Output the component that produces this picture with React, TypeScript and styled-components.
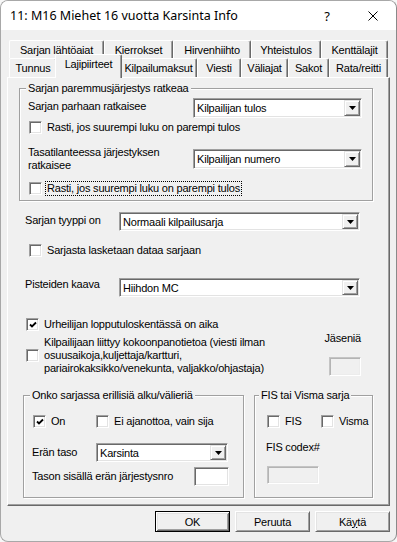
import styled, { createGlobalStyle, css } from "styled-components";

const GlobalStyle = createGlobalStyle`
  html, body {
    margin: 0;
    padding: 0;
    background: #f7f7f7;
  }
  body {
    font-family: "Liberation Sans", Arial, sans-serif;
    font-size: 11px;
    letter-spacing: -0.2px;
    color: #000;
  }
  * {
    box-sizing: border-box;
  }
`;

const Window = styled.div`
  width: 397px;
  height: 542px;
  display: flex;
  flex-direction: column;
  border: 1px solid #a8a8a8;
  border-right-color: #8a8a8a;
  border-radius: 8px;
  overflow: hidden;
  background: #f0f0f0;
`;

const TitleBar = styled.div`
  height: 29px;
  flex: none;
  display: flex;
  align-items: center;
  background: #fff;
  padding-left: 9px;
`;

const Title = styled.span`
  flex: 1;
  font-family: "Noto Sans", "Liberation Sans", sans-serif;
  font-size: 12.5px;
  letter-spacing: 0;
`;

const CaptionButton = styled.span`
  width: 46px;
  height: 29px;
  display: flex;
  align-items: center;
  justify-content: center;
  font-family: "Noto Sans", "Liberation Sans", sans-serif;
  font-size: 13px;
  letter-spacing: 0;
`;

const Body = styled.div`
  flex: 1;
  display: flex;
  flex-direction: column;
  padding: 10px 6px 0;
`;

const TabStrip = styled.div`
  display: flex;
  flex-direction: column;
  margin-left: 2px;
`;

const TabRow = styled.div<{ $h: number }>`
  display: flex;
  align-items: flex-start;
  height: ${(p) => p.$h}px;
`;

const Tab = styled.div<{ $w: number; $h: number; $active?: boolean }>`
  flex: none;
  width: ${(p) => p.$w}px;
  height: ${(p) => p.$h}px;
  padding-top: 2px;
  line-height: 14px;
  text-align: center;
  white-space: nowrap;
  background: #f0f0f0;
  border-top: 1px solid #fff;
  border-left: 1px solid #fff;
  border-right: 1px solid #696969;
  border-radius: 2px 2px 0 0;
  box-shadow: inset -1px 0 0 #a0a0a0;
  ${(p) =>
    p.$active &&
    css`
      position: relative;
      z-index: 1;
      width: ${p.$w + 4}px;
      height: ${p.$h + 5}px;
      margin: -4px -2px 0;
    `}
`;

const Panel = styled.div`
  height: 429px;
  flex: none;
  display: flex;
  flex-direction: column;
  border-top: 1px solid #fff;
  border-left: 1px solid #fff;
  border-right: 1px solid #696969;
  border-bottom: 1px solid #696969;
  box-shadow: inset -1px -1px 0 #a0a0a0;
`;

const GroupBox = styled.fieldset<{ $w: number; $h: number; $mt?: number; $ml?: number }>`
  flex: none;
  width: ${(p) => p.$w}px;
  height: ${(p) => p.$h}px;
  margin: ${(p) => p.$mt ?? 0}px 0 0 ${(p) => p.$ml ?? 0}px;
  padding: 0 8px;
  min-inline-size: 0;
  display: flex;
  flex-direction: column;
  border: 1px solid #a0a0a0;
  box-shadow: inset 1px 1px 0 #fff, 1px 1px 0 #fff;
`;

const Legend = styled.legend<{ $offset?: number }>`
  padding: 0 2px;
  margin-left: ${(p) => p.$offset ?? -2}px;
  line-height: 13px;
  background: #f0f0f0;
`;

const FieldRow = styled.div<{ $mt?: number; $ml?: number }>`
  display: flex;
  align-items: flex-start;
  margin: ${(p) => p.$mt ?? 0}px 0 0 ${(p) => p.$ml ?? 0}px;
`;

const FieldLabel = styled.span<{ $w?: number; $mt?: number; $ml?: number }>`
  flex: none;
  ${(p) => p.$w !== undefined && `width: ${p.$w}px;`}
  margin: ${(p) => p.$mt ?? 0}px 0 0 ${(p) => p.$ml ?? 0}px;
  line-height: 13px;
  white-space: nowrap;
`;

const sunken = css`
  border: 1px solid;
  border-color: #a0a0a0 #fff #fff #a0a0a0;
  box-shadow: inset 1px 1px 0 #696969, inset -1px -1px 0 #e3e3e3;
`;

const Combo = styled.div<{ $w: number; $h: number; $mt?: number }>`
  flex: none;
  display: flex;
  width: ${(p) => p.$w}px;
  height: ${(p) => p.$h}px;
  margin-top: ${(p) => p.$mt ?? 0}px;
  padding: 1px;
  background: #fff;
  ${sunken}
`;

const ComboValue = styled.span`
  flex: 1;
  display: flex;
  align-items: center;
  padding-left: 2px;
  white-space: nowrap;
`;

const DropButton = styled.span`
  flex: none;
  width: 16px;
  display: flex;
  align-items: center;
  justify-content: center;
  background: #f0f0f0;
  border: 1px solid;
  border-color: #e3e3e3 #696969 #696969 #e3e3e3;
  box-shadow: inset 1px 1px 0 #fff, inset -1px -1px 0 #a0a0a0;
`;

const TextBox = styled.div<{ $w: number; $h: number; $mt?: number; $ml?: number; $disabled?: boolean }>`
  flex: none;
  width: ${(p) => p.$w}px;
  height: ${(p) => p.$h}px;
  margin: ${(p) => p.$mt ?? 0}px 0 0 ${(p) => p.$ml ?? 0}px;
  background: ${(p) => (p.$disabled ? "#f0f0f0" : "#fff")};
  ${sunken}
  ${(p) =>
    p.$disabled &&
    css`
      border-color: #c4c4c4 #fff #fff #c4c4c4;
      box-shadow: inset 1px 1px 0 #b4b4b4, inset -1px -1px 0 #ececec;
    `}
`;

const CheckRow = styled.div<{ $mt?: number; $ml?: number }>`
  display: flex;
  align-items: center;
  margin: ${(p) => p.$mt ?? 0}px 0 0 ${(p) => p.$ml ?? 0}px;
`;

const CheckItem = styled.div<{ $w?: number; $mt?: number }>`
  flex: none;
  display: flex;
  align-items: center;
  ${(p) => p.$w !== undefined && `width: ${p.$w}px;`}
  margin-top: ${(p) => p.$mt ?? 0}px;
`;

const Box = styled.span`
  flex: none;
  width: 13px;
  height: 13px;
  margin-right: 3px;
  display: flex;
  align-items: center;
  justify-content: center;
  background: #fff;
  ${sunken}
`;

const CheckText = styled.span<{ $focused?: boolean }>`
  padding: 0 1px;
  line-height: 13px;
  white-space: nowrap;
  border: 1px ${(p) => (p.$focused ? "dotted #000" : "solid transparent")};
`;

const MemberColumn = styled.div`
  margin-left: auto;
  margin-right: 28px;
  display: flex;
  flex-direction: column;
  align-items: flex-end;
`;

const BottomGroups = styled.div`
  display: flex;
  gap: 10px;
  margin: 13px 0 0 15px;
`;

const ButtonRow = styled.div`
  display: flex;
  justify-content: flex-end;
  gap: 5px;
  margin-top: 5px;
`;

const DialogButton = styled.button<{ $default?: boolean }>`
  width: 75px;
  height: 21px;
  padding: 0;
  font: inherit;
  letter-spacing: -0.2px;
  color: #000;
  background: #f0f0f0;
  border: 1px solid;
  border-color: #fff #696969 #696969 #fff;
  box-shadow: inset 1px 1px 0 #e3e3e3, inset -1px -1px 0 #a0a0a0;
  ${(p) =>
    p.$default &&
    css`
      border-color: #000;
      box-shadow: inset 1px 1px 0 #fff, inset -1px -1px 0 #696969, inset 2px 2px 0 #e3e3e3,
        inset -2px -2px 0 #a0a0a0;
    `}
`;

const Arrow = () => (
  <svg width="7" height="4" viewBox="0 0 7 4">
    <polygon points="0,0 7,0 3.5,4" fill="#000" />
  </svg>
);

const CheckMark = () => (
  <svg width="8" height="8" viewBox="0 0 8 8">
    <path d="M1 3.5 L3 5.5 L7 1.5" stroke="#000" strokeWidth="1.8" fill="none" />
  </svg>
);

const CloseIcon = () => (
  <svg width="10" height="10" viewBox="0 0 10 10">
    <path d="M0.5 0.5 L9.5 9.5 M9.5 0.5 L0.5 9.5" stroke="#000" strokeWidth="1" />
  </svg>
);

function Dropdown({ value, w, h, mt }: { value: string; w: number; h: number; mt?: number }) {
  return (
    <Combo $w={w} $h={h} $mt={mt}>
      <ComboValue>{value}</ComboValue>
      <DropButton>
        <Arrow />
      </DropButton>
    </Combo>
  );
}

function Check({ checked, children, focused }: { checked?: boolean; children: React.ReactNode; focused?: boolean }) {
  return (
    <>
      <Box>{checked && <CheckMark />}</Box>
      <CheckText $focused={focused}>{children}</CheckText>
    </>
  );
}

const backTabs = [
  { label: "Sarjan lähtöajat", w: 95 },
  { label: "Kierrokset", w: 69 },
  { label: "Hirvenhiihto", w: 78 },
  { label: "Yhteistulos", w: 70 },
  { label: "Kenttälajit", w: 67 },
];

const frontTabs = [
  { label: "Tunnus", w: 48 },
  { label: "Lajipiirteet", w: 63, active: true },
  { label: "Kilpailumaksut", w: 77 },
  { label: "Viesti", w: 44 },
  { label: "Väliajat", w: 47 },
  { label: "Sakot", w: 41 },
  { label: "Rata/reitti", w: 59 },
];

export default function App() {
  return (
    <>
      <GlobalStyle />
      <Window>
        <TitleBar>
          <Title>11: M16 Miehet 16 vuotta Karsinta Info</Title>
          <CaptionButton>?</CaptionButton>
          <CaptionButton>
            <CloseIcon />
          </CaptionButton>
        </TitleBar>
        <Body>
          <TabStrip>
            <TabRow $h={18}>
              {backTabs.map((t) => (
                <Tab key={t.label} $w={t.w} $h={18}>
                  {t.label}
                </Tab>
              ))}
            </TabRow>
            <TabRow $h={19}>
              {frontTabs.map((t) => (
                <Tab key={t.label} $w={t.w} $h={19} $active={t.active}>
                  {t.label}
                </Tab>
              ))}
            </TabRow>
          </TabStrip>

          <Panel>
            <GroupBox $w={354} $h={119} $mt={4} $ml={11}>
              <Legend>Sarjan paremmusjärjestys ratkeaa</Legend>
              <FieldRow $mt={3}>
                <FieldLabel $w={165} $mt={2}>
                  Sarjan parhaan ratkaisee
                </FieldLabel>
                <Dropdown value="Kilpailijan tulos" w={169} h={20} />
              </FieldRow>
              <CheckRow $mt={2} $ml={1}>
                <Check>Rasti, jos suurempi luku on parempi tulos</Check>
              </CheckRow>
              <FieldRow $mt={11}>
                <FieldLabel $w={165}>
                  Tasatilanteessa järjestyksen
                  <br />
                  ratkaisee
                </FieldLabel>
                <Dropdown value="Kilpailijan numero" w={169} h={20} mt={3} />
              </FieldRow>
              <CheckRow $mt={9} $ml={1}>
                <Check focused>Rasti, jos suurempi luku on parempi tulos</Check>
              </CheckRow>
            </GroupBox>

            <FieldRow $mt={11} $ml={17}>
              <FieldLabel $w={94} $mt={2}>
                Sarjan tyyppi on
              </FieldLabel>
              <Dropdown value="Normaali kilpailusarja" w={241} h={19} />
            </FieldRow>
            <CheckRow $mt={12} $ml={21}>
              <Check>Sarjasta lasketaan dataa sarjaan</Check>
            </CheckRow>
            <FieldRow $mt={20} $ml={17}>
              <FieldLabel $w={94} $mt={0}>
                Pisteiden kaava
              </FieldLabel>
              <Dropdown value="Hiihdon MC" w={241} h={19} />
            </FieldRow>
            <CheckRow $mt={20} $ml={18}>
              <Check checked>Urheilijan lopputuloskentässä on aika</Check>
            </CheckRow>
            <FieldRow $ml={18}>
              <CheckItem $mt={3}>
                <Check>
                  Kilpailijaan liittyy kokoonpanotietoa (viesti ilman
                  <br />
                  osuusaikoja,kuljettaja/kartturi,
                  <br />
                  pariairokaksikko/venekunta, valjakko/ohjastaja)
                </Check>
              </CheckItem>
              <MemberColumn>
                <FieldLabel>Jäseniä</FieldLabel>
                <TextBox $w={32} $h={19} $mt={12} $disabled />
              </MemberColumn>
            </FieldRow>

            <BottomGroups>
              <GroupBox $w={221} $h={109}>
                <Legend>Onko sarjassa erillisiä alku/välieriä</Legend>
                <CheckRow $mt={12} $ml={1}>
                  <CheckItem $w={63}>
                    <Check checked>On</Check>
                  </CheckItem>
                  <CheckItem>
                    <Check>Ei ajanottoa, vain sija</Check>
                  </CheckItem>
                </CheckRow>
                <FieldRow $mt={14}>
                  <FieldLabel $w={64} $mt={3}>
                    Erän taso
                  </FieldLabel>
                  <Dropdown value="Karsinta" w={132} h={19} />
                </FieldRow>
                <FieldRow $mt={5}>
                  <FieldLabel $w={162} $mt={3}>
                    Tason sisällä erän järjestysnro
                  </FieldLabel>
                  <TextBox $w={35} $h={19} />
                </FieldRow>
              </GroupBox>
              <GroupBox $w={119} $h={109}>
                <Legend $offset={-4}>FIS tai Visma sarja</Legend>
                <CheckRow $mt={12} $ml={4}>
                  <CheckItem $w={54}>
                    <Check>FIS</Check>
                  </CheckItem>
                  <CheckItem>
                    <Check>Visma</Check>
                  </CheckItem>
                </CheckRow>
                <FieldLabel $mt={12} $ml={3}>
                  FIS codex#
                </FieldLabel>
                <TextBox $w={52} $h={18} $mt={12} $ml={4} $disabled />
              </GroupBox>
            </BottomGroups>
          </Panel>

          <ButtonRow>
            <DialogButton $default>OK</DialogButton>
            <DialogButton>Peruuta</DialogButton>
            <DialogButton>
              Kä<u>y</u>tä
            </DialogButton>
          </ButtonRow>
        </Body>
      </Window>
    </>
  );
}
